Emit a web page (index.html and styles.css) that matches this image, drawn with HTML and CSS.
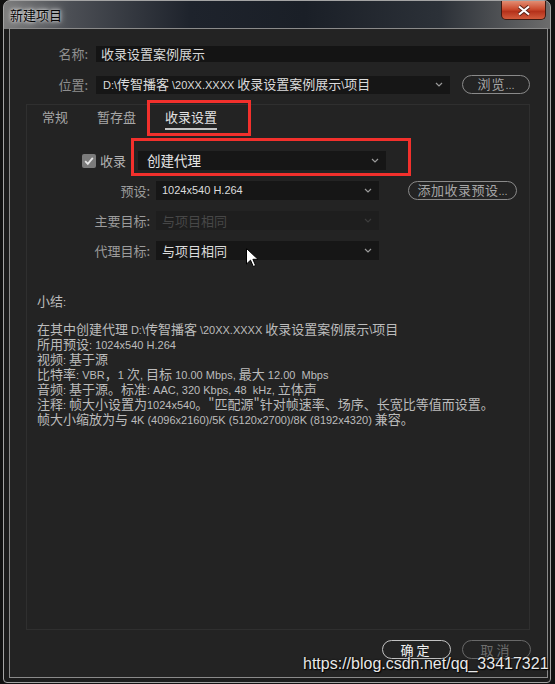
FILE: index.html
```html
<!DOCTYPE html>
<html lang="zh-cn">

<head>
    <meta charset="UTF-8">
    <meta name="viewport" content="width=device-width, initial-scale=1.0">
    <title>新建项目</title>
    <link rel="stylesheet" href="styles.css">
</head>

<body>
    <div class="window">
        <div class="titlebar">
            <span class="title">新建项目</span>
            <span class="close">
                <svg width="14" height="11" viewBox="0 0 14 11">
                    <path d="M2 1.5l10 8M12 1.5l-10 8" stroke="#5a2318" stroke-width="4" fill="none" />
                    <path d="M2 1.5l10 8M12 1.5l-10 8" stroke="#fff" stroke-width="2.2" fill="none" />
                </svg>
            </span>
        </div>

        <div class="dialog">
            <div class="top">
                <label>名称:</label>
                <div class="field">收录设置案例展示</div>

                <label>位置:</label>
                <div class="select loc">
                    <span><span class="l">D:\</span>传智播客 <span class="l">\20XX.XXXX</span> 收录设置案例展示<span class="l">\</span>项目</span>
                    <svg width="8" height="5" viewBox="0 0 8 5"><path d="M1 1l3 3 3-3" stroke="#9a9a9a" fill="none" stroke-width="1.2" /></svg>
                </div>
                <button class="btn">浏览<span class="l">...</span></button>
            </div>

            <div class="panel">
                <div class="tabs">
                    <span>常规</span>
                    <span>暂存盘</span>
                    <span class="active">收录设置</span>
                </div>

                <div class="ingest">
                    <svg width="14" height="14" viewBox="0 0 14 14">
                        <rect width="14" height="14" rx="2" fill="#7b7b7b" />
                        <path d="M3.2 7.2l2.6 2.6 5-6" stroke="#e6e6e6" stroke-width="1.8" fill="none" />
                    </svg>
                    <span class="lab">收录</span>
                    <div class="select wide">
                        <span>创建代理</span>
                        <svg width="8" height="5" viewBox="0 0 8 5"><path d="M1 1l3 3 3-3" stroke="#9a9a9a" fill="none" stroke-width="1.2" /></svg>
                    </div>
                </div>

                <div class="opts">
                    <label>预设:</label>
                    <div class="select">
                        <span class="l">1024x540 H.264</span>
                        <svg width="8" height="5" viewBox="0 0 8 5"><path d="M1 1l3 3 3-3" stroke="#9a9a9a" fill="none" stroke-width="1.2" /></svg>
                    </div>
                    <button class="btn add">添加收录预设<span class="l">...</span></button>

                    <label>主要目标:</label>
                    <div class="select off">
                        <span>与项目相同</span>
                        <svg width="8" height="5" viewBox="0 0 8 5"><path d="M1 1l3 3 3-3" stroke="#3c3c3c" fill="none" stroke-width="1.2" /></svg>
                    </div>
                    <span></span>

                    <label>代理目标:</label>
                    <div class="select">
                        <span>与项目相同</span>
                        <svg width="8" height="5" viewBox="0 0 8 5"><path d="M1 1l3 3 3-3" stroke="#9a9a9a" fill="none" stroke-width="1.2" /></svg>
                    </div>
                    <span></span>
                </div>

                <div class="summary">
                    <p class="head">小结<span class="l">:</span></p>
                    <p>在其中创建代理 <span class="l">D:\</span>传智播客 <span class="l">\20XX.XXXX</span> 收录设置案例展示<span class="l">\</span>项目</p>
                    <p>所用预设<span class="l">: 1024x540 H.264</span></p>
                    <p>视频<span class="l">:</span> 基于源</p>
                    <p>比特率<span class="l">: VBR</span>，<span class="l">1 </span>次<span class="l">, </span>目标<span class="l"> 10.00 Mbps, </span>最大<span class="l"> 12.00&nbsp; Mbps</span></p>
                    <p>音频<span class="l">:</span> 基于源。标准<span class="l">: AAC, 320 Kbps, 48&nbsp; kHz, </span>立体声</p>
                    <p>注释<span class="l">:</span> 帧大小设置为<span class="l">1024x540</span>。"匹配源"针对帧速率、场序、长宽比等值而设置。</p>
                    <p>帧大小缩放为与 <span class="l">4K (4096x2160)/5K (5120x2700)/8K (8192x4320)</span> 兼容。</p>
                </div>
            </div>

            <div class="footer">
                <button class="btn ok">确定</button>
                <button class="btn cancel">取消</button>
            </div>
        </div>
    </div>

    <!-- 标注框和鼠标 -->
    <div class="mark mark-tab"></div>
    <div class="mark mark-ingest"></div>
    <svg class="cursor" width="13" height="20" viewBox="0 0 13 20">
        <path d="M0.5 0.5V16l4-3.8 2.8 6.3 2.3-1-2.7-6.2H12z" fill="#fff" stroke="#000" stroke-width="1" />
    </svg>
    <div class="watermark">https://blog.csdn.net/qq_33417321</div>
</body>

</html>
```

FILE: styles.css
```css
body {
    margin: 0;
    background: #111;
    font-family: "Noto Sans CJK SC", sans-serif;
    font-size: 13px;
    color: #b8b8b8;
}

.window {
    margin-left: 3px;
    width: 548px;
    height: 683px;
    box-sizing: border-box;
    border: 1px solid #a4a4a4;
    border-radius: 7px 7px 4px 4px;
    background:
        linear-gradient(90deg, #7d7d7d 0%, #4c4f55 12%, #1e232c 34%, #1a1f27 55%, #2c3138 80%, #6c6c6c 100%) top / 100% 28px no-repeat,
        #1c1c1c;
    display: flex;
    flex-direction: column;
    padding: 0 2px 4px 5px;
}

.titlebar {
    height: 27px;
    display: flex;
    align-items: flex-start;
    justify-content: space-between;
}

.title {
    margin-top: 5px;
    margin-left: 1px;
    line-height: 18px;
    color: #050505;
    text-shadow: 0 0 6px #fff, 0 0 3px rgba(255, 255, 255, .8);
}

.close {
    width: 45px;
    height: 19px;
    margin-right: 2px;
    box-sizing: border-box;
    border: 1px solid #3e1a12;
    border-top: 0;
    border-radius: 0 0 5px 5px;
    background: linear-gradient(#e28d72 0%, #cc4c2f 45%, #b5321b 58%, #d25b3c 100%);
    display: flex;
    align-items: center;
    justify-content: center;
}

.dialog {
    flex: 1;
    border: 1px solid #8a8a8a;
    background: #232323;
    display: flex;
    flex-direction: column;
}

.top {
    display: grid;
    grid-template-columns: 62px 1fr 68px;
    column-gap: 8px;
    row-gap: 13px;
    align-items: center;
    padding: 17px 17px 0 16px;
}

label {
    text-align: right;
    color: #8f8f8f;
    white-space: nowrap;
    line-height: 16px;
}

.field {
    grid-column: 2 / 4;
    height: 16px;
    line-height: 16px;
    padding-left: 5px;
    background: #141414;
    color: #d8d8d8;
}

.select {
    height: 19px;
    line-height: 19px;
    box-sizing: border-box;
    padding: 0 7px 0 5px;
    background: #161616;
    color: #dcdcdc;
    display: flex;
    align-items: center;
    justify-content: space-between;
    white-space: nowrap;
}

.loc {
    height: 18px;
    margin-right: 4px;
    padding-left: 7px;
}

.l {
    font-family: "Liberation Sans", sans-serif;
    font-size: 11px;
}

.btn {
    height: 19px;
    padding: 0;
    box-sizing: border-box;
    border: 1px solid #8a8a8a;
    border-radius: 10px;
    background: transparent;
    color: #a6a6a6;
    font-family: inherit;
    font-size: 13px;
    line-height: 16px;
    letter-spacing: 1px;
}

.btn .l {
    letter-spacing: 0;
}

.panel {
    flex: 1;
    margin: 10px 17px 0 16px;
    border: 1px solid #2f2f2f;
}

.tabs {
    display: flex;
    gap: 29px;
    padding-left: 15px;
}

.tabs span {
    padding-top: 3px;
    padding-bottom: 2px;
    line-height: 18px;
    color: #a8a8a8;
    border-bottom: 2px solid transparent;
}

.tabs .active {
    color: #e2e2e2;
    border-bottom-color: #c4c4c4;
}

.ingest {
    display: flex;
    align-items: center;
    height: 19px;
    margin-top: 21px;
    padding-left: 55px;
}

.ingest .lab {
    margin-left: 4px;
    line-height: 19px;
    color: #b4b4b4;
}

.wide {
    width: 248px;
    margin-left: 12px;
    padding-left: 9px;
    font-size: 13.5px;
    color: #e6e6e6;
}

.opts {
    display: grid;
    grid-template-columns: 123px 223px 132px;
    grid-auto-rows: 19px;
    column-gap: 6px;
    row-gap: 11px;
    align-items: center;
    margin-top: 11px;
}

.opts .select {
    padding-left: 6px;
}

.opts label {
    color: #9c9c9c;
}

.add {
    width: 109px;
    margin-left: 23px;
    letter-spacing: 0.5px;
}

.off {
    background: #1e1e1e;
    color: #474747;
}

.summary {
    margin-top: 33px;
    padding-left: 10px;
    color: #bcbcbc;
}

.summary p {
    margin: 0;
    height: 15px;
    line-height: 15px;
    white-space: nowrap;
}

.summary .head {
    margin-bottom: 13px;
}

.footer {
    display: flex;
    justify-content: flex-end;
    gap: 11px;
    padding: 10px 16px 18px;
}

.footer .btn {
    width: 69px;
    letter-spacing: 3px;
}

.ok {
    color: #f2f2f2;
    border-color: #c2c2c2;
}

.cancel {
    color: #6e6e6e;
    border-color: #686868;
}

.mark {
    position: absolute;
    box-sizing: border-box;
    border: 3px solid #f2302c;
}

.mark-tab {
    left: 147px;
    top: 100px;
    width: 104px;
    height: 36px;
}

.mark-ingest {
    left: 131px;
    top: 138px;
    width: 280px;
    height: 38px;
}

.cursor {
    position: absolute;
    left: 246px;
    top: 248px;
}

.watermark {
    position: absolute;
    left: 303px;
    top: 655px;
    font-family: "Liberation Sans", sans-serif;
    font-size: 16px;
    color: #e8e8e8;
    text-shadow: 0 0 2px #000, 1px 1px 1px #000;
}
```
